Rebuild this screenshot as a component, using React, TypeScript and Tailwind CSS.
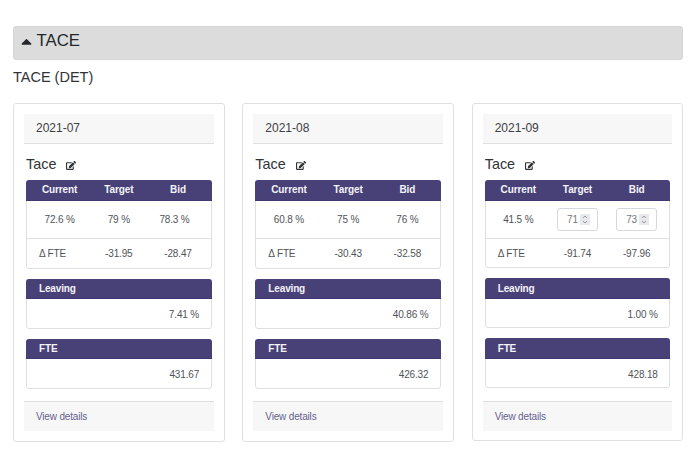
import React from "react";
import { FaCaretUp, FaEdit } from "react-icons/fa";

type Month = {
  month: string;
  current: string;
  target: string;
  bid: string;
  editable?: boolean;
  bidOffset?: boolean;
  fteTarget: string;
  fteBid: string;
  leaving: string;
  fte: string;
};

const months: Month[] = [
  { month: "2021-07", current: "72.6 %", target: "79 %", bid: "78.3 %", bidOffset: true, fteTarget: "-31.95", fteBid: "-28.47", leaving: "7.41 %", fte: "431.67" },
  { month: "2021-08", current: "60.8 %", target: "75 %", bid: "76 %", fteTarget: "-30.43", fteBid: "-32.58", leaving: "40.86 %", fte: "426.32" },
  { month: "2021-09", current: "41.5 %", target: "71", bid: "73", editable: true, fteTarget: "-91.74", fteBid: "-97.96", leaving: "1.00 %", fte: "428.18" },
];

function Stepper({ value }: { value: string }) {
  return (
    <div className="flex h-[23px] w-[41px] items-center rounded-[3px] border border-[#d5d9dd] pl-[9px] text-[#75797d]">
      <span className="w-[13px]">{value}</span>
      <span className="flex h-[11px] w-[10px] items-center justify-center bg-[#e9e8ec]">
        <svg width="6" height="9" viewBox="0 0 6 9" fill="none" stroke="#929292" strokeWidth="0.9">
          <path d="M1 3 L3 1 L5 3 M1 6 L3 8 L5 6" />
        </svg>
      </span>
    </div>
  );
}

function Value({ text, editable }: { text: string; editable?: boolean }) {
  return (
    <div className="flex justify-center">
      {editable ? <Stepper value={text} /> : text}
    </div>
  );
}

function Single({ title, value, tall }: { title: string; value: string; tall?: boolean }) {
  return (
    <section className="mt-[10px] h-[50px] rounded-[3px] border border-[#dfdfdf]">
      <h4 className={`${tall ? "h-[21px] pt-[2px]" : "h-[20px] pt-px"} -mx-px -mt-px flex items-center rounded-t-[3px] border-b border-[#3f3870] bg-[#484177] pl-[13px] font-bold text-[#f4f3f8]`}>
        {title}
      </h4>
      <div className="flex h-[29px] items-center justify-end pr-[11.5px] pt-[3px]">{value}</div>
    </section>
  );
}

function Card({ data }: { data: Month }) {
  return (
    <article className={`${data.editable ? "h-[338px]" : "h-[339px]"} w-[211.6px] rounded-[3px] border border-[#dfdfdf] px-[10px] pt-[10px]`}>
      <header className="flex h-[30px] items-center border-b border-[#dfdfdf] bg-[#f7f7f7] pb-[2px] pl-3 text-[12px] text-[#3c4044]">
        {data.month}
      </header>
      <div className="px-[2px] text-[10px] tracking-[-0.15px] text-[#505458]">
        <h3 className="flex h-[36px] items-center pt-[5px] text-[14.4px] tracking-normal text-[#303438]">
          Tace
          <FaEdit className="ml-[10px] mt-[2px] h-[9px] w-[10px]" />
        </h3>
        <section className={`${data.editable ? "h-[88px]" : "h-[89px]"} rounded-[3px] border border-[#dfdfdf]`}>
          <div className="-mx-px -mt-px grid h-[21px] grid-cols-3 items-center rounded-t-[3px] border-b border-[#3f3870] bg-[#484177] px-1 text-center font-bold tracking-[-0.1px] text-[#f4f3f8]">
            <span>Current</span>
            <span>Target</span>
            <span>Bid</span>
          </div>
          <div className="grid h-[38px] grid-cols-3 items-center border-b border-[#dfdfdf] px-[3px]">
            <Value text={data.current} />
            <Value text={data.target} editable={data.editable} />
            <div className={data.bidOffset ? "pr-[7px]" : ""}>
              <Value text={data.bid} editable={data.editable} />
            </div>
          </div>
          <div className="grid h-[29px] grid-cols-3 items-center px-[3px] text-center">
            <span className="pl-[9px] text-left">Δ FTE</span>
            <span>{data.fteTarget}</span>
            <span>{data.fteBid}</span>
          </div>
        </section>
        <Single title="Leaving" value={data.leaving} tall={data.editable} />
        <Single title="FTE" value={data.fte} tall={data.editable} />
      </div>
      <footer className={`${data.editable ? "mt-[13px]" : "mt-3"} flex h-[30px] items-center border-t border-[#dfdfdf] bg-[#f7f7f7] pl-3 text-[10px] tracking-[-0.17px] text-[#665f91]`}>
        <a>View details</a>
      </footer>
    </article>
  );
}

export default function App() {
  return (
    <main className="h-[468px] w-[700px] bg-white pl-[13px] pt-[26px] font-['Liberation_Sans',Arial,sans-serif] leading-none text-[#303438]">
      <div className="flex h-[34px] w-[670px] items-center rounded-[3px] border border-[#d6d6d6] bg-[#dcdcdc] pb-[3px] pl-[7px] text-[16.8px] text-[#24282c]">
        <FaCaretUp className="mr-[4.5px] h-[17px] w-[11px]" />
        TACE
      </div>
      <h2 className="flex h-[43px] items-start pt-[10px] text-[14.5px] text-[#303438]">TACE (DET)</h2>
      <div className="flex w-[670.3px] items-start justify-between">
        {months.map((m) => (
          <Card key={m.month} data={m} />
        ))}
      </div>
    </main>
  );
}
